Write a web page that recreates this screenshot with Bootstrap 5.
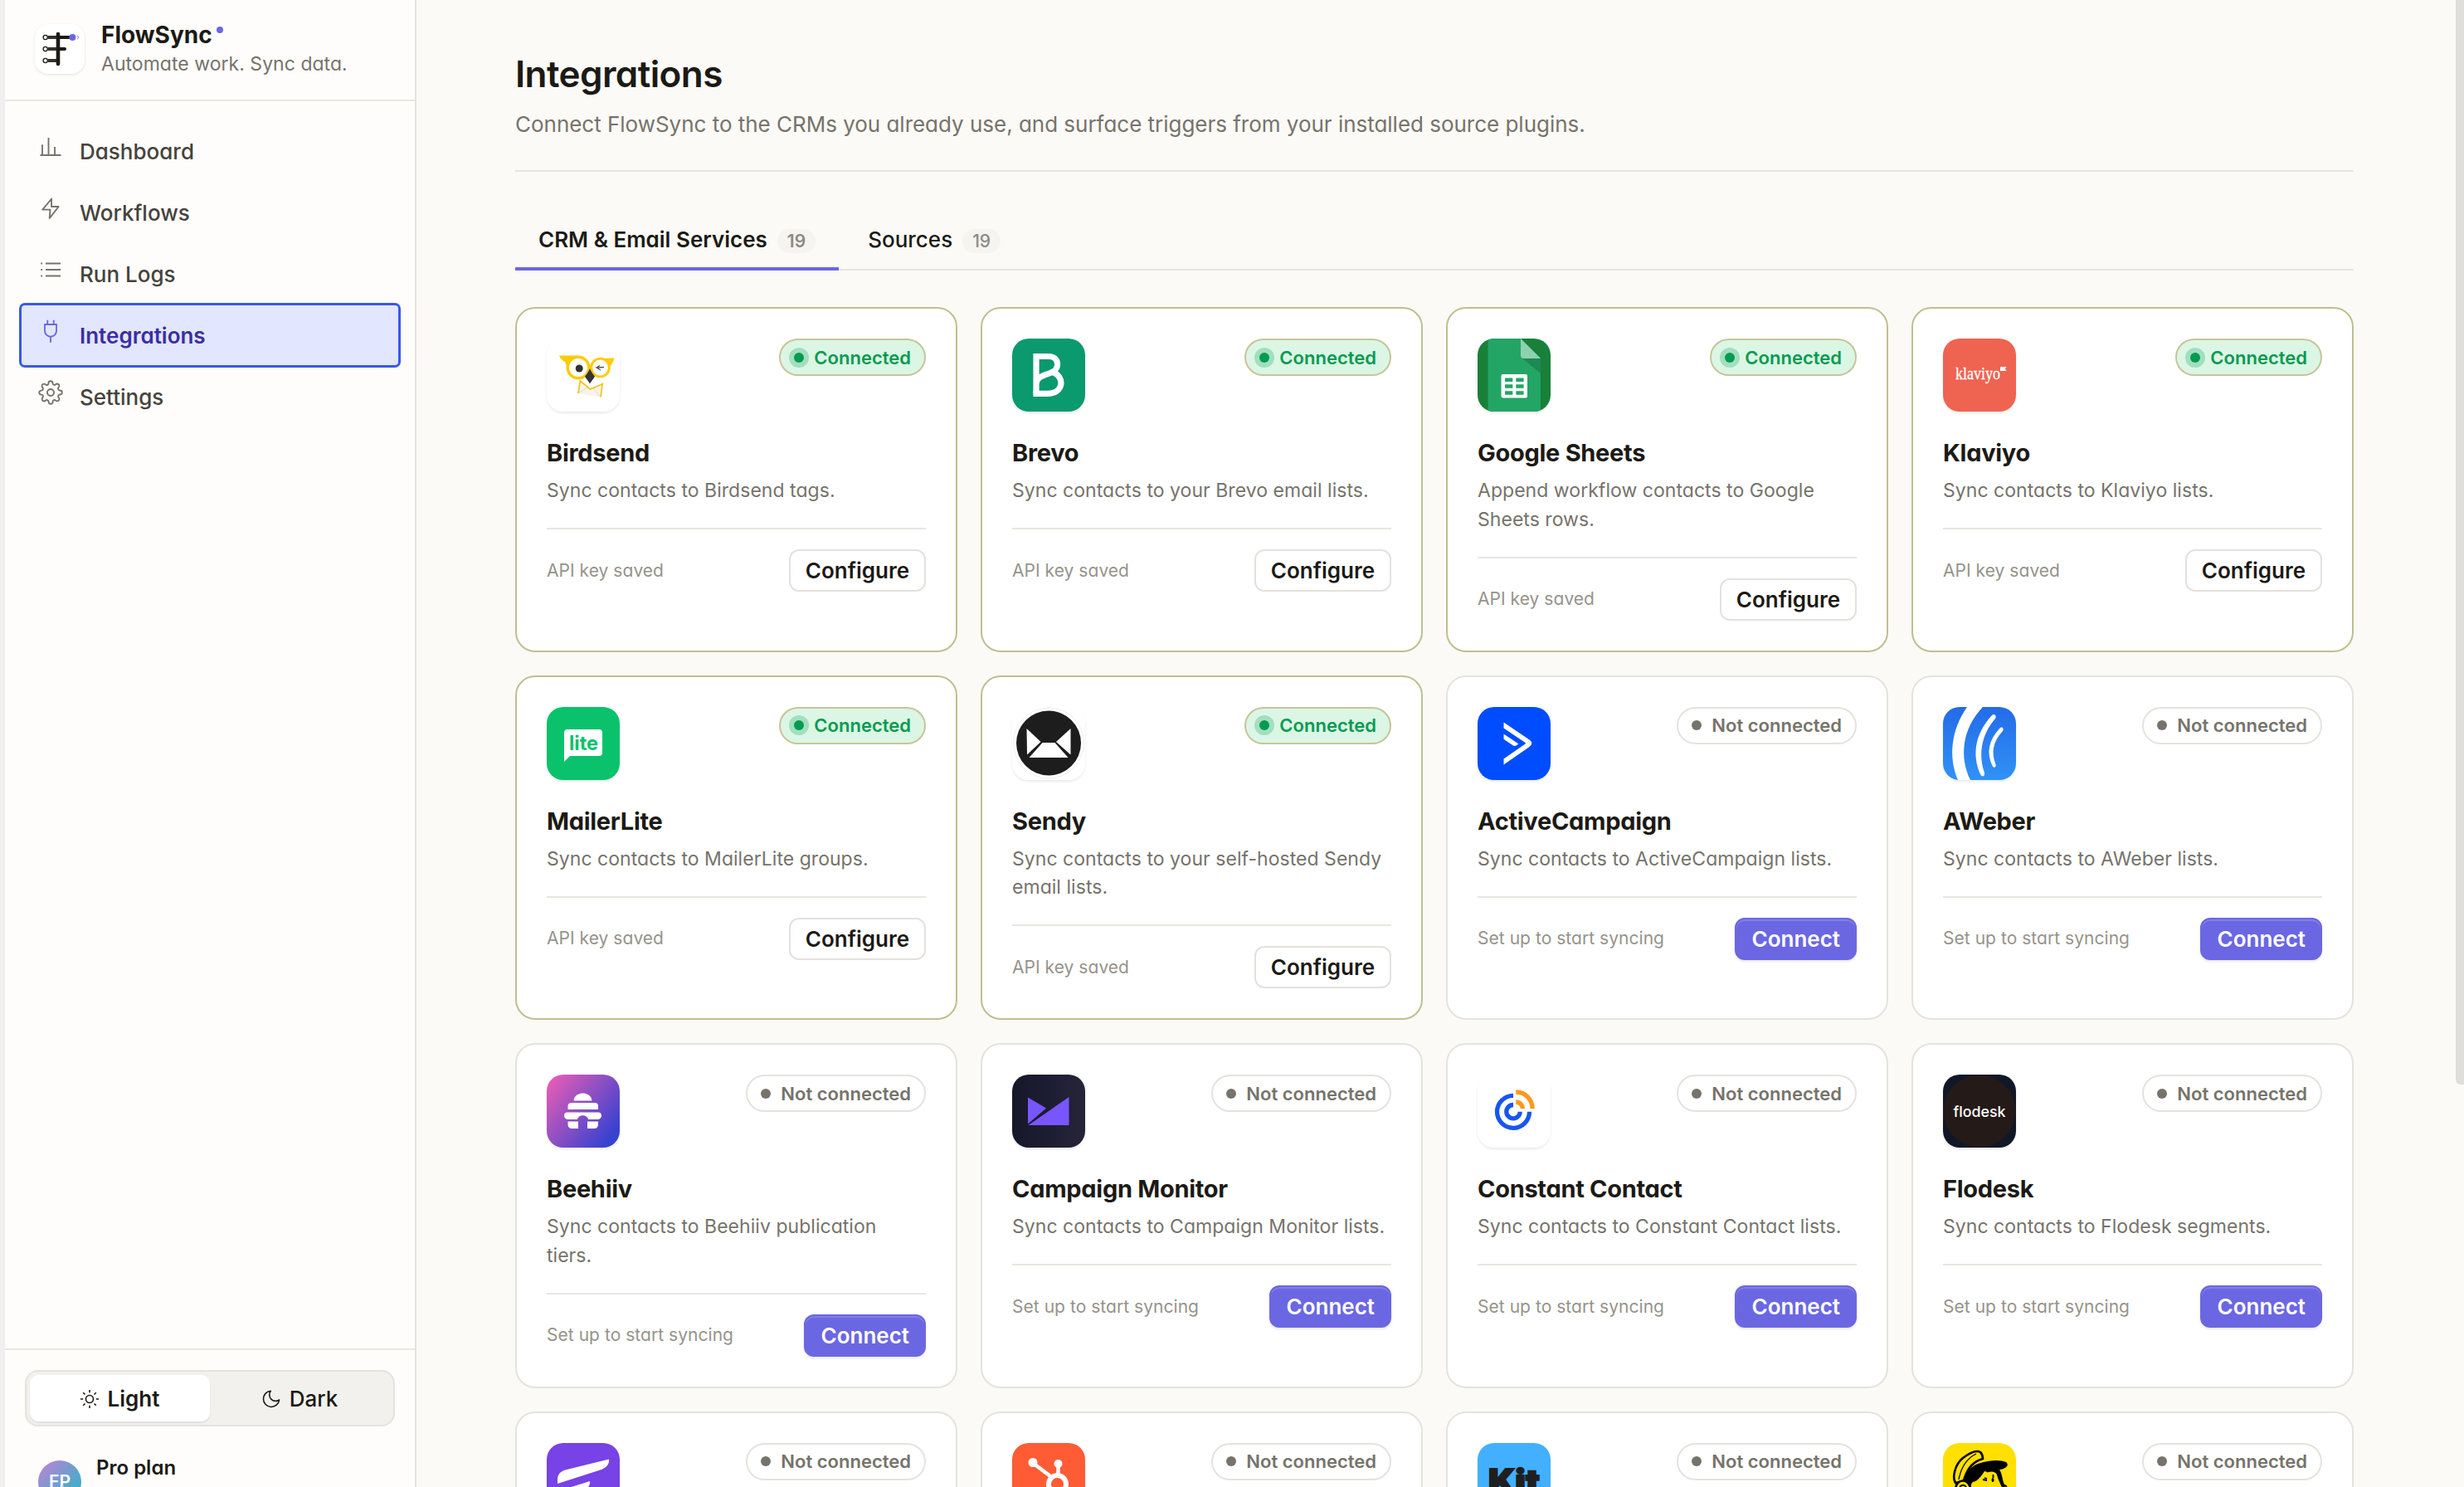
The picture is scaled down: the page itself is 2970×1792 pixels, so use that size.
<!DOCTYPE html>
<html lang="en">
<head>
    <meta charset="UTF-8">
    <meta name="viewport" content="width=device-width, initial-scale=1">
    <title>Integrations - FlowSync</title>
    <link href="https://cdn.jsdelivr.net/npm/bootstrap@5.3.3/dist/css/bootstrap.min.css" rel="stylesheet">
    <style>
        body { font-family: Inter, "Liberation Sans", sans-serif; font-feature-settings: "cv11"; font-size: 26px; line-height: 1.5; color: #1c1a15; background: #fbfaf6; }
        .fs-app { height: 1792px; border-left: 6px solid #f0f0f0; }

        /* sidebar */
        .fs-side { width: 496px; background: #fefdfb; border-right: 2px solid #e4e3de; }
        .fs-brand { height: 122px; padding: 0 36px 3px; gap: 20px; border-bottom: 2px solid #e8e7e1; }
        .fs-mark { width: 60px; height: 60px; border-radius: 16px; background: #fff; box-shadow: 0 1px 3px rgba(28, 26, 21, .12); }
        .fs-name { font-size: 28px; font-weight: 700; line-height: 36px; }
        .fs-name i { width: 8px; height: 8px; margin: 8px 0 0 5px; background: #6b67e2; }
        .fs-tag { font-size: 23px; line-height: 34px; letter-spacing: .03px; color: #76736b; }
        .fs-menu { padding: 24px 20px; gap: 2px; }
        .fs-menu .nav-link { height: 72px; padding: 0 20px; gap: 20px; font-weight: 500; color: #45433b; border-radius: 4px; }
        .fs-menu .nav-link svg { width: 30px; height: 30px; margin-bottom: 10px; color: #76736b; }
        .fs-menu .nav-link.active { font-weight: 600; color: #3a2da6; background: #e2e6fe; outline: 3px solid #3858e9; }
        .fs-menu .nav-link.active svg { color: #6b67e2; }
        .fs-foot { height: 167px; padding: 24px; border-top: 2px solid #e8e7e1; }
        .fs-theme { height: 68px; padding: 4px; border: 2px solid #e4e3dd; border-radius: 16px; background: #f2f1ee; }
        .fs-theme .btn { font-size: 26px; font-weight: 500; line-height: 1; padding-top: 7px; gap: 11px; color: #1c1a15; border: 0; border-radius: 11px; }
        .fs-theme .btn.active { font-weight: 600; color: #1c1a15; background: #fff; box-shadow: 0 2px 2px rgba(28, 26, 21, .08); }
        .fs-plan { padding: 24px 16px 0; gap: 18px; }
        .fs-avatar { width: 52px; height: 52px; margin-top: 17px; font-size: 21px; font-weight: 600; color: #fff; background: linear-gradient(135deg, #c77fd8, #19bcc4); }
        .fs-level { font-size: 24px; font-weight: 600; padding-top: 8px; }

        /* page */
        .fs-main { padding: 62px 133px 0 119px; }
        .fs-title { font-size: 44px; font-weight: 600; line-height: 54px; letter-spacing: -.013em; margin: 0 0 14px; }
        .fs-sub { color: #76736b; letter-spacing: -.02px; margin: 0; padding-bottom: 36px; border-bottom: 2px solid #e6e5e0; }
        .fs-tabs { margin: 43px 0 44px; gap: 7px; border-bottom: 2px solid #e6e5e0; }
        .fs-tabs .nav-link { height: 76px; padding: 4px 28px 0; gap: 12px; margin-bottom: -2px; font-weight: 500; color: #1c1a15; border-bottom: 4px solid transparent; }
        .fs-tabs .nav-link.active { font-weight: 600; border-color: #6b67e2; }
        .fs-count { height: 29px; padding: 0 12px; margin-top: 4px; font-size: 21px; line-height: 29px; color: #8d8a82; background: #f5f4f1; border-radius: 15px; }
        .fs-grid { --bs-gutter-x: 28px; --bs-gutter-y: 28px; }

        /* integration card */
        .fs-card { height: 415.5px; padding: 36px; border: 2px solid #e4e3dd; border-radius: 24px; background: #fff; }
        .fs-card.is-on { border-color: #bfbf90; }
        .fs-logo { width: 88px; height: 88px; border-radius: 20px; box-shadow: 0 2px 3px rgba(28, 26, 21, .09); }
        .fs-state { height: 45px; padding: 0 16px; gap: 12px; font-size: 22px; font-weight: 600; line-height: 1; color: #76736b; border: 2px solid #e4e3dd; border-radius: 23px; }
        .fs-state i { width: 12px; height: 12px; background: #76736b; }
        .is-on .fs-state { color: #059a52; background: #dbf6e4; border-color: #c8c49c; }
        .is-on .fs-state i { background: #059a52; box-shadow: 0 0 0 6px #a2dfbf; }
        .fs-card h2 { font-size: 29px; font-weight: 700; line-height: 38px; letter-spacing: -.01em; margin: 31px 0 9px; }
        .fs-card p { font-size: 23px; line-height: 34.5px; letter-spacing: .04px; color: #76736b; margin: 0 0 27.7px; }
        .fs-act { padding-top: 24px; font-size: 21px; letter-spacing: .04px; color: #96938b; border-top: 2px solid #e9e6e1; }
        .fs-act .btn { height: 51px; padding: 0 18px; font-size: 26px; font-weight: 600; letter-spacing: 0; line-height: 48px; color: #1c1a15; background: #fff; border: 2px solid #e4e1dd; border-radius: 12px; }
        .fs-act .btn-primary { color: #fff; background: #6b67e2; border-color: #6b67e2; box-shadow: inset 0 2px 0 rgba(255, 255, 255, .16), 0 2px 3px rgba(28, 26, 21, .1); }
        .fs-thumb { right: 0; top: 0; width: 10px; height: 1307px; background: #dfdeda; border-radius: 0 0 0 6px; }
    </style>
</head>
<body class="overflow-hidden">
    <div class="fs-app d-flex overflow-hidden position-relative">
        <aside class="fs-side d-flex flex-column flex-shrink-0">
            <div class="fs-brand d-flex align-items-center">
                <div class="fs-mark flex-shrink-0">
                    <svg class="d-block" width="60" height="60" viewBox="0 0 60 60" fill="none">
                        <path d="M16 16h28M16 30h20M16 44h12" stroke="#35332e" stroke-width="4"/>
                        <path d="M28 16h16M28 30h8" stroke="#1c1a15" stroke-width="4" stroke-linecap="round"/>
                        <path d="M28 12v36" stroke="#1c1a15" stroke-width="4.6" stroke-linecap="round"/>
                        <g fill="#fff" stroke="#1c1a15" stroke-width="1.3"><circle cx="12.7" cy="16" r="2.6"/><circle cx="12.7" cy="30" r="2.6"/><circle cx="12.7" cy="44" r="2.6"/></g>
                        <circle cx="45.4" cy="16" r="4" fill="#6b67e2"/>
                        <path d="M51 14l2 2-2 2" stroke="#a9a6f0" stroke-width="1.2"/>
                    </svg>
                </div>
                <div>
                    <div class="fs-name d-flex">FlowSync<i class="rounded-circle"></i></div>
                    <div class="fs-tag">Automate work. Sync data.</div>
                </div>
            </div>
            <nav class="fs-menu nav flex-column flex-nowrap flex-grow-1" id="menu"></nav>
            <div class="fs-foot flex-shrink-0 overflow-hidden">
                <div class="fs-theme d-flex">
                    <button class="btn active d-flex flex-fill w-50 align-items-center justify-content-center">
                        <svg width="22" height="22" viewBox="0 0 22 22" fill="none" stroke="currentColor" stroke-width="1.6"><circle cx="11" cy="11" r="4.5"/><path d="M11 0v3.2M11 18.8V22M0 11h3.2M18.8 11H22M3.2 3.2l2.3 2.3M16.5 16.5l2.3 2.3M3.2 18.8l2.3-2.3M16.5 5.5l2.3-2.3"/></svg>
                        Light
                    </button>
                    <button class="btn d-flex flex-fill w-50 align-items-center justify-content-center">
                        <svg width="22" height="22" viewBox="0 0 22 22" fill="none" stroke="currentColor" stroke-width="1.6" stroke-linejoin="round"><path d="M10.3 1.3A9.6 9.6 0 1 0 20.6 12 7.5 7.5 0 0 1 10.3 1.3z"/></svg>
                        Dark
                    </button>
                </div>
                <div class="fs-plan d-flex">
                    <div class="fs-avatar rounded-circle d-flex align-items-center justify-content-center">FP</div>
                    <div class="fs-level">Pro plan</div>
                </div>
            </div>
        </aside>

        <main class="fs-main flex-grow-1">
            <h1 class="fs-title">Integrations</h1>
            <p class="fs-sub">Connect FlowSync to the CRMs you already use, and surface triggers from your installed source plugins.</p>
            <div class="fs-tabs nav">
                <a class="nav-link active d-flex align-items-center">CRM &amp; Email Services <span class="fs-count">19</span></a>
                <a class="nav-link d-flex align-items-center">Sources <span class="fs-count">19</span></a>
            </div>
            <div class="fs-grid row" id="grid"></div>
        </main>
        <div class="fs-thumb position-absolute"></div>
    </div>

    <script>
        const menu = [
            ['Dashboard', '<path d="M2 20h20M4 20V9.8M10 20V3.2M16 20v-8"/>'],
            ['Workflows', '<path d="M12.9 2.8 4.2 13.3h7.4l-.6 8.3 8.7-11.2h-6.9z"/>'],
            ['Run Logs', '<path d="M7.2 6h14.4M7.2 12h14.4M7.2 18h14.4M2.6 6H4M2.6 12H4M2.6 18H4"/>'],
            ['Integrations', '<path d="M9 1.4v4.2M15 1.4v4.2M6.4 5.6h11.2v6.2a5.6 5.6 0 0 1-11.2 0zM12 17.4V23"/>'],
            ['Settings', '<circle cx="12" cy="12" r="3.2"/><path d="M19.4 15a1.65 1.65 0 0 0 .33 1.82l.06.06a2 2 0 0 1 0 2.83 2 2 0 0 1-2.83 0l-.06-.06a1.65 1.65 0 0 0-1.82-.33 1.65 1.65 0 0 0-1 1.51V21a2 2 0 0 1-2 2 2 2 0 0 1-2-2v-.09A1.65 1.65 0 0 0 9 19.4a1.65 1.65 0 0 0-1.82.33l-.06.06a2 2 0 0 1-2.83 0 2 2 0 0 1 0-2.83l.06-.06a1.65 1.65 0 0 0 .33-1.82 1.65 1.65 0 0 0-1.51-1H3a2 2 0 0 1-2-2 2 2 0 0 1 2-2h.09A1.65 1.65 0 0 0 4.6 9a1.65 1.65 0 0 0-.33-1.82l-.06-.06a2 2 0 0 1 0-2.83 2 2 0 0 1 2.83 0l.06.06a1.65 1.65 0 0 0 1.82.33H9a1.65 1.65 0 0 0 1-1.51V3a2 2 0 0 1 2-2 2 2 0 0 1 2 2v.09a1.65 1.65 0 0 0 1 1.51 1.65 1.65 0 0 0 1.82-.33l.06-.06a2 2 0 0 1 2.83 0 2 2 0 0 1 0 2.83l-.06.06a1.65 1.65 0 0 0-.33 1.82V9a1.65 1.65 0 0 0 1.51 1H21a2 2 0 0 1 2 2 2 2 0 0 1-2 2h-.09a1.65 1.65 0 0 0-1.51 1z"/>']
        ];

        // name, description, connected, logo (88x88 box)
        const apps = [
            ['Birdsend', 'Sync contacts to Birdsend tags.', 1, `<rect width="88" height="88" fill="#fff"/>
                <path d="M40 51 38 66 65 70.5 67.5 55 52.500 61z" fill="#f6f4ea"/>
                <path d="M38.5 65.5 49 59M64.5 70 56 60" stroke="#ddd9cc" stroke-width="1" fill="none"/>
                <path d="M38 66 40.3 51 52.5 61 67.2 54.6 65 70.5" fill="none" stroke="#f2c21a" stroke-width="1.7"/>
                <path d="M15 20.5H38L52 33 62 24 81.5 23.5C80 29 77 34 73 35.5L30 37C24 34 23 31 22 28 18 26 16 24 15 20.5z" fill="#ffcb05"/>
                <circle cx="38" cy="35" r="14.5" fill="#ffcb05"/><circle cx="64.5" cy="35" r="12.3" fill="#ffcb05"/>
                <circle cx="38" cy="35" r="11" fill="#fff"/><circle cx="64.5" cy="35" r="9.4" fill="#fff"/>
                <circle cx="39.2" cy="36" r="4.5" fill="#333"/><path d="M69 34.5 60 35l5 3M60 35l4-2.5" fill="none" stroke="#555" stroke-width="1.3"/>
                <path d="M52 36C54 41 56 43 58 45.5 56 49 54 51 52 54.5 50 51 48 49 46 45.5 48 43 50 41 52 36z" fill="#333"/>`],
            ['Brevo', 'Sync contacts to your Brevo email lists.', 1, `<rect width="88" height="88" fill="#0b996e"/>
                <g fill="none" stroke="#fff" stroke-width="7.2"><path d="M29 66.3V21.5H44C57 21.500 58 37 47 41 38 44.500 29 46 29 55"/><path d="M49 40.500C64 46 62 66.300 43 66.300H25.400"/></g>`],
            ['Google Sheets', 'Append workflow contacts to Google Sheets rows.', 1, `<rect width="88" height="88" fill="#188038"/><path d="M12.5 0H52L76 24V88H12.5z" fill="#23a566"/>
                <path d="M54 24H76V42z" fill="#1c8a55"/><path d="M52 0 76 24H56a4 4 0 0 1-4-4z" fill="#8ed1b1"/>
                <rect x="28.5" y="43" width="31.5" height="28.5" rx="2" fill="#fff"/><path d="M33 47.500H42.300V52H33zM46.300 47.500H55.600V52H46.300zM33 55.300H42.300V59.700H33zM46.300 55.300H55.600V59.700H46.300zM33 63.200H42.300V67.700H33zM46.300 63.200H55.600V67.700H46.300z" fill="#23a566"/>`],
            ['Klaviyo', 'Sync contacts to Klaviyo lists.', 1, `<rect width="88" height="88" fill="#ef6351"/><text x="15" y="48.5" font-family="Liberation Serif, serif" font-size="21" textLength="54" lengthAdjust="spacingAndGlyphs" fill="#fff" stroke="#fff" stroke-width=".3">klaviyo</text><path d="M69 34h7.500l-1.600 2.500 1.600 2.500H69z" fill="#fff"/>`],
            ['MailerLite', 'Sync contacts to MailerLite groups.', 1, `<rect width="88" height="88" fill="#0ac26b"/><path d="M25 27H63a4 4 0 0 1 4 4V55a4 4 0 0 1-4 4H28L21 66V31a4 4 0 0 1 4-4z" fill="#fff"/><text x="27" y="52" font-family="Inter, sans-serif" font-weight="700" font-size="24" textLength="35" lengthAdjust="spacingAndGlyphs" fill="#0ac26b">lite</text>`],
            ['Sendy', 'Sync contacts to your self-hosted Sendy email lists.', 1, `<rect width="88" height="88" fill="#fff"/><circle cx="44" cy="43.5" r="42.5" fill="none" stroke="#eee"/><circle cx="44" cy="43.5" r="39" fill="#1d1d1d"/><path d="M17.5 26 34.5 42 18 57.5zM70.500 26 53 42 70.500 57.500zM36.500 43H51.500L67.500 61H20.500z" fill="#fff"/>`],
            ['ActiveCampaign', 'Sync contacts to ActiveCampaign lists.', 0, `<rect width="88" height="88" fill="#004cff"/><path d="M31.5 18.5 62.5 39.5Q68 43.7 62.5 48L31.5 69.5V62.5L57.5 44.5Q58.5 43.7 57.5 43L31.5 25.5zM31.5 32.5 49.5 44.5 46.5 46.5Q44.500 47.500 42.500 46.300L31.500 38.700z" fill="#fff"/>`],
            ['AWeber', 'Sync contacts to AWeber lists.', 0, `<rect width="88" height="88" fill="url(#aw)"/><path d="M29 0H48C22 27 20 62 33 88H18C6 60 10 27 29 0z" fill="#fff"/><path d="M59 10C61 7.500 65.500 10.500 63 14 45 35 43 59 50 79 51 84 46.500 85 45 81 35 58 38 33 59 10zM68.500 25.500C71 23 74 26 72 29 60 42 58 55 63.500 69 64.500 73 61 74 59.500 71 52 55 55 40 68.500 25.500z" fill="#fff"/>`],
            ['Beehiiv', 'Sync contacts to Beehiiv publication tiers.', 0, `<rect width="88" height="88" fill="url(#bh)"/><path d="M32.5 31.500C33 25 39 22.500 43.500 22.500S54 25 54.500 31.500zM29 34H58a4 4 0 0 1 4 4V42H25.500V38a4 4 0 0 1 3.500-4zM25 45.500H62A4 4 0 0 1 66 49.500 5 5 0 0 1 62 54H50C49 47.500 38 47.500 37 54H25A5 5 0 0 1 21 49.500 4 4 0 0 1 25 45.500zM25.500 56.500H38V65H30A4.500 4.500 0 0 1 25.500 60.500zM49 56.500H62V60.500A4.500 4.500 0 0 1 57.500 65H49z" fill="#fff"/>`],
            ['Campaign Monitor', 'Sync contacts to Campaign Monitor lists.', 0, `<rect width="88" height="88" fill="url(#cm)"/><path d="M19 27.5 41 40.5 19 59.5zM68.500 27V61H19.500z" fill="#7856ff"/>`],
            ['Constant Contact', 'Sync contacts to Constant Contact lists.', 0, `<rect width="88" height="88" fill="#fff"/><g fill="none" stroke-width="5.3"><path d="M43 25.3A19.500 19.500 0 1 0 62.500 44.700M43 36.500A8.200 8.200 0 1 0 51.200 44.700" stroke="#1856ed"/><path d="M46.300 21A19.800 19.800 0 0 1 66.100 41M46.300 33A8 8 0 0 1 54.300 41" stroke="#ff981a"/></g>`],
            ['Flodesk', 'Sync contacts to Flodesk segments.', 0, `<rect width="88" height="88" fill="#101828"/><circle cx="44" cy="44" r="43.5" fill="#241a18"/><text x="12.5" y="50.5" font-family="Inter, sans-serif" font-weight="500" font-size="17.5" textLength="63" lengthAdjust="spacingAndGlyphs" fill="#fff">flodesk</text>`],
            // last row: only the card heads reach into the window
            ['', '', 0, `<rect width="88" height="88" fill="#7742e6"/><path d="M75 19.5V23C74 27 71 30 66 32L13 49V44C13 38 16 34.500 22 32.500zM52 46V49C51 53 48 56 44 57L13 67V62C13 59 16 57 20 56z" fill="#fff"/>`],
            ['', '', 0, `<rect width="88" height="88" fill="#ff5c35"/><path d="M25 24 46 40M55.5 25V40" stroke="#fff" stroke-width="4.5"/><circle cx="25" cy="23.5" r="5.5" fill="#fff"/><circle cx="55.5" cy="25" r="5" fill="#fff"/><circle cx="54.5" cy="49.5" r="10.5" fill="none" stroke="#fff" stroke-width="6"/>`],
            ['', '', 0, `<rect width="88" height="88" fill="#43b0ff"/><text x="13" y="61" font-family="Inter, sans-serif" font-weight="900" font-size="41" textLength="62" lengthAdjust="spacingAndGlyphs" fill="#1f1f1f" stroke="#1f1f1f" stroke-width="2">Kit</text>`],
            ['', '', 0, `<rect width="88" height="88" fill="#ffe000"/>
                <path d="M26 52C24 40 30 30 42 25 56 20 70 20 76 23 80 26 77 31 68 32 72 38 71 44 74 50 76 54 75 58 74 62H66L62 46C58 40 54 34 50 34 46 40 42 46 36 47 33 49 33 56 34 62H26z" fill="#000"/>
                <path d="M51 37C57 33 63 34 65 38 66 44 70 50 71 54L68 62H40C42 54 46 50 48 47z" fill="#ffe000"/>
                <path d="M15 48C11 42 14 26 24 18 32 12 40 8 45 11 47 13 48 17 48 19 38 22 30 28 25 45 22 47 18 47 15 48z" fill="#ffe000" stroke="#000" stroke-width="2.6"/>
                <path d="M40 13C30 18 22 28 19 44" fill="none" stroke="#000" stroke-width="1.3"/>
                <circle cx="24" cy="54" r="8.5" fill="#ffe000" stroke="#000" stroke-width="2.6"/><path d="M20 57C19 51 25 49 28 53" fill="none" stroke="#000" stroke-width="2"/>
                <path d="M48 44l5 1M60.500 38v4M50 42l3 1M73 51c4-1 5 4 0 5" fill="none" stroke="#000" stroke-width="1.8"/><ellipse cx="60" cy="44.5" rx="1.5" ry="2.5"/>`]
        ];

        document.getElementById('menu').innerHTML = menu.map(([label, icon]) => `
            <a class="nav-link d-flex align-items-center ${label == 'Integrations' ? 'active' : ''}">
                <svg viewBox="0 0 24 24" fill="none" stroke="currentColor" stroke-width="1.5" stroke-linejoin="round">${icon}</svg>${label}
            </a>`).join('');

        document.getElementById('grid').innerHTML = apps.map(([name, text, on, logo]) => `
            <div class="col-3">
                <div class="fs-card ${on ? 'is-on' : ''}">
                    <div class="d-flex justify-content-between align-items-start">
                        <svg class="fs-logo" viewBox="0 0 88 88">${logo}</svg>
                        <span class="fs-state d-flex align-items-center"><i class="rounded-circle"></i>${on ? 'Connected' : 'Not connected'}</span>
                    </div>
                    ${name && `<h2>${name}</h2>
                    <p>${text}</p>
                    <div class="fs-act d-flex justify-content-between align-items-center">
                        ${on ? 'API key saved <button class="btn">Configure</button>' : 'Set up to start syncing <button class="btn btn-primary">Connect</button>'}
                    </div>`}
                </div>
            </div>`).join('');
    </script>

    <!-- gradients shared by the logos -->
    <svg class="position-absolute" width="0" height="0">
        <linearGradient id="aw" x1="0" y1="0" x2="0" y2="1"><stop stop-color="#246be8"/><stop offset="1" stop-color="#3092f6"/></linearGradient>
        <linearGradient id="bh" x1="0" y1="0.1" x2="1" y2="0.9"><stop stop-color="#e85db6"/><stop offset=".9" stop-color="#3842d0"/></linearGradient>
        <linearGradient id="cm"><stop stop-color="#15172a"/><stop offset="1" stop-color="#262439"/></linearGradient>
    </svg>
    <script src="https://cdn.jsdelivr.net/npm/bootstrap@5.3.3/dist/js/bootstrap.bundle.min.js"></script>
</body>
</html>
